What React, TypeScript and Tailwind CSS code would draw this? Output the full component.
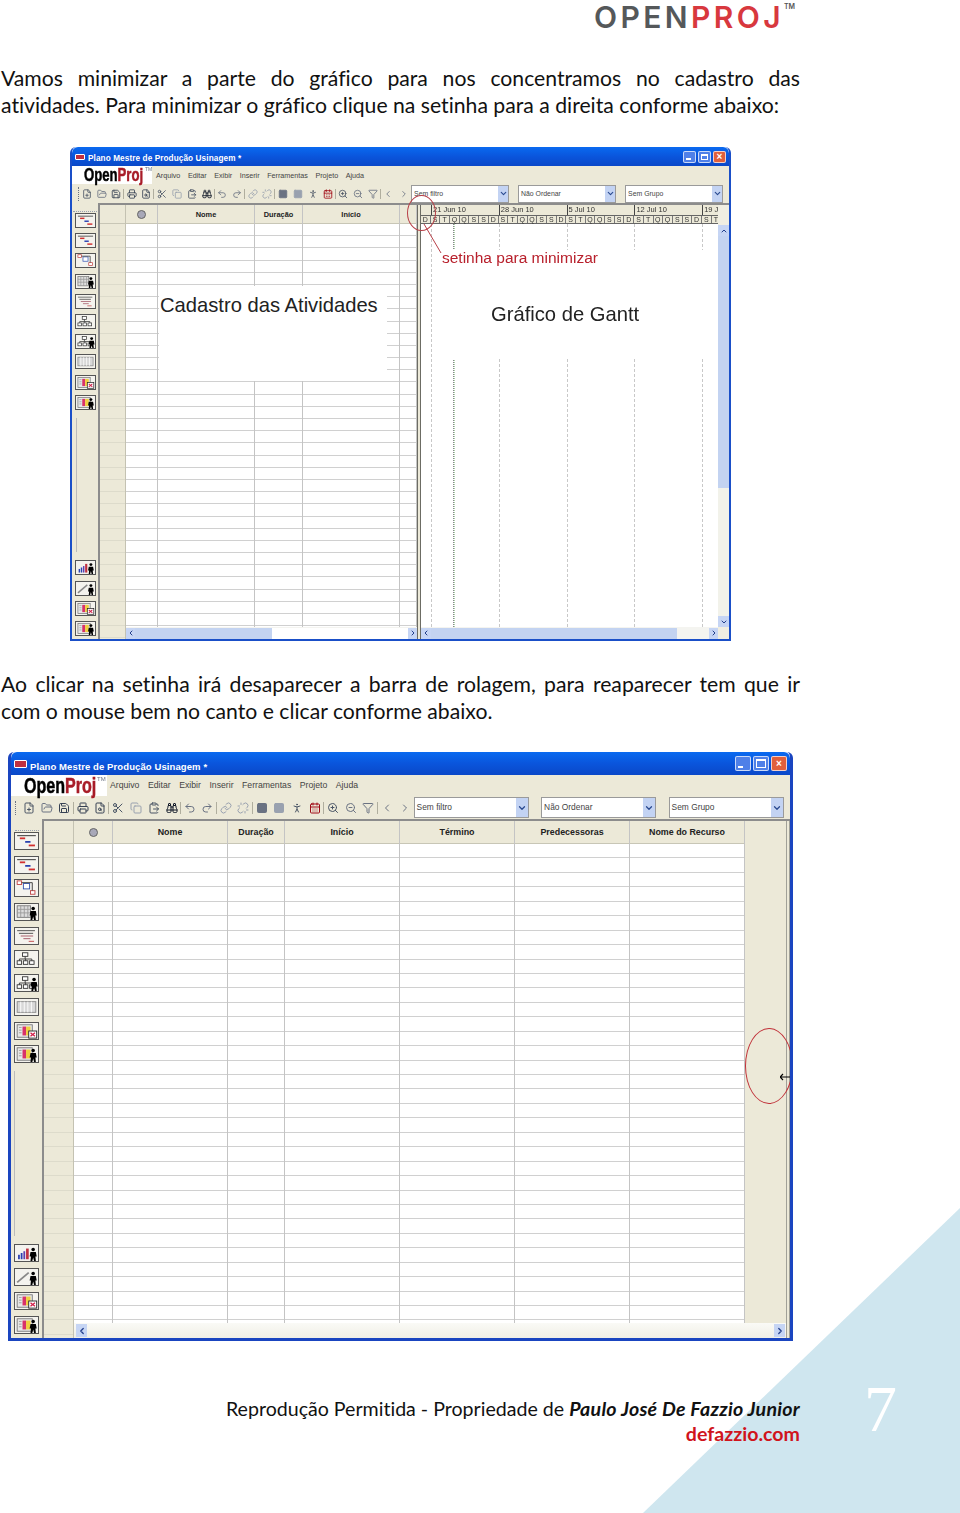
import clsx from "clsx";
import {
  Binoculars,
  CalendarDays,
  ChevronDown,
  ChevronLeft,
  ChevronRight,
  ChevronUp,
  ClipboardPaste,
  Copy,
  FilePlus,
  FileSearch,
  Filter,
  FolderOpen,
  Link,
  PersonStanding,
  Printer,
  Redo2,
  Save,
  Scissors,
  Square,
  Undo2,
  Unlink,
  ZoomIn,
  ZoomOut,
} from "lucide-react";

const menuItems = ["Arquivo", "Editar", "Exibir", "Inserir", "Ferramentas", "Projeto", "Ajuda"];

const toolbarIcons = [
  { Icon: FilePlus, color: "text-gray-600" },
  { Icon: FolderOpen, color: "text-gray-500" },
  { Icon: Save, color: "text-gray-700", sep: true },
  { Icon: Printer, color: "text-gray-700" },
  { Icon: FileSearch, color: "text-gray-700", sep: true },
  { Icon: Scissors, color: "text-gray-600" },
  { Icon: Copy, color: "text-gray-400" },
  { Icon: ClipboardPaste, color: "text-gray-600" },
  { Icon: Binoculars, color: "text-gray-900", sep: true },
  { Icon: Undo2, color: "text-gray-500" },
  { Icon: Redo2, color: "text-gray-500", sep: true },
  { Icon: Link, color: "text-gray-400" },
  { Icon: Unlink, color: "text-gray-400", sep: true },
  { Icon: Square, color: "text-gray-500 fill-gray-500" },
  { Icon: Square, color: "text-gray-400 fill-gray-400" },
  { Icon: PersonStanding, color: "text-gray-600" },
  { Icon: CalendarDays, color: "text-red-800", sep: true },
  { Icon: ZoomIn, color: "text-gray-600" },
  { Icon: ZoomOut, color: "text-gray-500" },
  { Icon: Filter, color: "text-gray-500", sep: true },
  { Icon: ChevronLeft, color: "text-gray-500" },
  { Icon: ChevronRight, color: "text-gray-500" },
];

type IconKind =
  | "gantt"
  | "network"
  | "gridPerson"
  | "report"
  | "wbs"
  | "wbsPerson"
  | "grid"
  | "colorX"
  | "colorPerson"
  | "histogram"
  | "pen";

const topIcons: IconKind[] = ["gantt", "gantt", "network", "gridPerson", "report", "wbs", "wbsPerson", "grid", "colorX", "colorPerson"];
const bottomIcons: IconKind[] = ["histogram", "pen", "colorX", "colorPerson"];

function Person({ x = 17 }: { x?: number }) {
  return (
    <g fill="#000" transform={`translate(${x} 3)`}>
      <circle cx="3" cy="2" r="2" />
      <path d="M0 5h6l1 5H5.500l.5 5H4l-1-4-1 4H0l.5-5H-1z" />
    </g>
  );
}

function TreeBoxes() {
  return (
    <g fill="#fff" stroke="#333" strokeWidth="1">
      <rect x="8" y="2" width="6" height="4" />
      <rect x="2" y="11" width="5" height="4" />
      <rect x="9" y="11" width="5" height="4" />
      <rect x="16" y="11" width="5" height="4" />
      <path d="M11 6v3M4.500 11V9h14v2M11.500 9v2" fill="none" />
    </g>
  );
}

function ColorGrid() {
  return (
    <g>
      <rect x="2" y="2" width="17" height="14" fill="#e8e8e8" stroke="#777" />
      <path d="M4 5h3M4 8h3M4 11h3" stroke="#999" />
      <rect x="8" y="4" width="4" height="10" fill="#d8326a" />
      <rect x="12" y="4" width="5" height="10" fill="#f0d040" />
    </g>
  );
}

function SideIcon({ kind, small }: { kind: IconKind; small: boolean }) {
  return (
    <svg
      viewBox="0 0 25 18"
      className={clsx("shrink-0 border border-[#555] bg-[#f4f3ee]", small ? "h-[15px] w-[21px]" : "h-[18px] w-[25px]")}
    >
      {kind === "gantt" && (
        <g>
          <path d="M2 3h21" stroke="#222" strokeWidth="1" />
          <rect x="5" y="5" width="6" height="2" fill="#d23030" />
          <rect x="11" y="9" width="6" height="2" fill="#2a40b0" />
          <rect x="15" y="13" width="7" height="2" fill="#d23030" />
        </g>
      )}
      {kind === "network" && (
        <g fill="#fff" strokeWidth="1">
          <rect x="2" y="1" width="5" height="4" stroke="#c04040" />
          <rect x="9" y="4" width="7" height="6" stroke="#3050b0" />
          <rect x="17" y="12" width="5" height="4" stroke="#c04040" />
          <path d="M7 3h12v9" fill="none" stroke="#333" />
        </g>
      )}
      {kind === "gridPerson" && (
        <g>
          <rect x="2" y="2" width="15" height="13" fill="#ddd" stroke="#777" />
          <path d="M6 2v13M10 2v13M14 2v13M2 6h15M2 10h15" stroke="#999" />
          <Person />
        </g>
      )}
      {kind === "report" && (
        <g fill="none" strokeWidth="1">
          <path d="M2 3h20M4 6h16" stroke="#444" />
          <path d="M6 9h14M9 12h8" stroke="#a05060" />
          <path d="M15 15h6" stroke="#c04040" />
        </g>
      )}
      {kind === "wbs" && <TreeBoxes />}
      {kind === "wbsPerson" && (
        <g>
          <TreeBoxes />
          <Person x={18} />
        </g>
      )}
      {kind === "grid" && (
        <g>
          <rect x="2" y="3" width="21" height="12" fill="#d8d8d8" stroke="#888" />
          <path d="M6 3v12M10 3v12M14 3v12M18 3v12" stroke="#fff" />
        </g>
      )}
      {kind === "colorX" && (
        <g>
          <ColorGrid />
          <rect x="15" y="9" width="9" height="8" fill="#fff" stroke="#222" />
          <path d="M17 11l5 4M22 11l-5 4" stroke="#d0204a" strokeWidth="1.500" />
        </g>
      )}
      {kind === "colorPerson" && (
        <g>
          <ColorGrid />
          <Person />
        </g>
      )}
      {kind === "histogram" && (
        <g>
          <rect x="3" y="11" width="2" height="5" fill="#2a40b0" />
          <rect x="6" y="9" width="2" height="7" fill="#2a40b0" />
          <rect x="9" y="7" width="2" height="9" fill="#6040b0" />
          <rect x="12" y="4" width="3" height="12" fill="#c03040" />
          <Person />
        </g>
      )}
      {kind === "pen" && (
        <g>
          <path d="M2 15L15 4" stroke="#888" strokeWidth="2" fill="none" />
          <Person />
        </g>
      )}
    </svg>
  );
}

function Sidebar({ small }: { small: boolean }) {
  return (
    <div className={clsx("flex shrink-0 flex-col items-center border-r-2 border-[#8c8c8c] bg-[#ece9d8]", small ? "w-[28px] pt-[8px]" : "w-[33px] pt-[11px]")}>
      <div className="mb-[1px] h-[1px] w-[24px] border-t border-dotted border-gray-400" />
      <div className={clsx("flex flex-col", small ? "gap-[5.200px]" : "gap-[5.700px]")}>
        {topIcons.map((kind, i) => (
          <SideIcon key={i} kind={kind} small={small} />
        ))}
      </div>
      <div className={clsx("flex-1 self-start border-l border-[#bbb]", small ? "my-[8px] ml-[4px]" : "my-[8px] ml-[3px]")} />
      <div className={clsx("flex flex-col", small ? "gap-[5.200px] pb-[3px]" : "gap-[6px] pb-[4px]")}>
        {bottomIcons.map((kind, i) => (
          <SideIcon key={i} kind={kind} small={small} />
        ))}
      </div>
    </div>
  );
}

function TitleBar({ small }: { small: boolean }) {
  const btn = small ? "h-[12px] w-[13px] rounded-[2px]" : "h-[15px] w-[16px] rounded-[2px]";
  return (
    <div
      className={clsx(
        "flex items-center rounded-t-[6px] bg-gradient-to-b from-[#0a6af0] via-[#0a55dc] to-[#0a48c8] font-bold text-white",
        small ? "h-[19px] gap-[3px] pl-[3px] pr-[3px] text-[8.200px]" : "h-[23px] gap-[3px] pl-[3px] pr-[3px] text-[9.500px]"
      )}
    >
      <div className={clsx("rounded-[1px] border border-white bg-[#c03040]", small ? "h-[6px] w-[10px]" : "h-[8px] w-[13px]")} />
      <span className={clsx("flex-1 tracking-[0.1px]", small ? "pt-[3px]" : "pt-[5px]")}>Plano Mestre de Produção Usinagem *</span>
      <div className="flex gap-[2px]">
        <div className={clsx(btn, "relative border border-white/70 bg-[#4f80e8]")}>
          <div className="absolute bottom-[2px] left-[2px] h-[2px] w-[5px] bg-white" />
        </div>
        <div className={clsx(btn, "relative border border-white/70 bg-[#4f80e8]")}>
          <div className="absolute inset-[2px] border border-t-2 border-white" />
        </div>
        <div className={clsx(btn, "flex items-center justify-center border border-white/70 bg-[#e0603c] text-[10px] leading-none")}>×</div>
      </div>
    </div>
  );
}

function MenuBar({ small }: { small: boolean }) {
  return (
    <div className={clsx("flex items-center bg-[#ece9d8] text-[#444]", small ? "h-[18px] text-[7.200px]" : "h-[21px] text-[8.700px]")}>
      <div className={clsx("relative h-full shrink-0 bg-white", small ? "w-[80px]" : "w-[96px]")}>
        <span
          className={clsx(
            "absolute origin-left scale-x-[.73] whitespace-nowrap font-bold [-webkit-text-stroke:0.5px]",
            small ? "left-[12px] top-[-1px] text-[18px] leading-[20px]" : "left-[13px] top-[-1px] text-[22px] leading-[24px]"
          )}
        >
          <span className="text-black">Open</span>
          <span className="text-[#a81c28]">Proj</span>
        </span>
        <span className={clsx("absolute top-[1px] leading-none text-gray-500", small ? "left-[73px] text-[5px]" : "left-[86px] text-[6px]")}>TM</span>
      </div>
      <div className={clsx("flex", small ? "ml-[4px] gap-[7.500px]" : "ml-[3px] gap-[8.500px]")}>
        {menuItems.map((item) => (
          <span key={item}>{item}</span>
        ))}
      </div>
    </div>
  );
}

function Combo({ label, small }: { label: string; small: boolean }) {
  return (
    <div className={clsx("flex items-center border border-[#9a9a9a] bg-white text-[#444]", small ? "h-[18px] w-[98px] pl-[2px] text-[6.900px]" : "h-[21px] w-[115px] pl-[2px] text-[8.400px]")}>
      <span className="flex-1">{label}</span>
      <div className={clsx("flex h-full items-center justify-center bg-[#c3d3f3] text-[#2a4a90]", small ? "w-[10px]" : "w-[12px]")}>
        <ChevronDown size={small ? 9 : 10} strokeWidth={3} />
      </div>
    </div>
  );
}

function Toolbar({ small }: { small: boolean }) {
  return (
    <div className={clsx("flex items-center bg-[#ece9d8]", small ? "h-[19px] pl-[6px]" : "h-[23px] pl-[4px]")}>
      <div className={clsx("h-[14px] border-l border-dotted border-gray-500", small ? "mr-[0px]" : "mr-[4px]")} />
      <div className="flex items-center">
        {toolbarIcons.map(({ Icon, color, sep }, i) => (
          <div key={i} className={clsx("flex items-center justify-center", small ? "w-[15.100px]" : "w-[17.900px]", sep && "border-r border-[#b0ae9e]")}>
            <Icon size={small ? 10 : 12} strokeWidth={2} className={color} />
          </div>
        ))}
      </div>
      <div className={clsx("flex", small ? "gap-[9px]" : "gap-[12.500px]")}>
        <Combo label="Sem filtro" small={small} />
        <Combo label="Não Ordenar" small={small} />
        <Combo label="Sem Grupo" small={small} />
      </div>
    </div>
  );
}

function Rows({ small, count, tone }: { small: boolean; count: number; tone: string }) {
  return (
    <>
      {Array.from({ length: count }).map((_, i) => (
        <div key={i} className={clsx("shrink-0 border-b-[1.500px]", tone, small ? "h-[12.200px]" : "h-[14.450px]")} />
      ))}
    </>
  );
}

function Column({ label, width, small, count }: { label?: React.ReactNode; width: string; small: boolean; count: number }) {
  return (
    <div className={clsx("flex shrink-0 flex-col overflow-hidden border-r border-[#c4c4c4] bg-white", width)}>
      <div className={clsx("flex shrink-0 items-center justify-center border-b border-[#c8c6b6] bg-[#ece9d8] font-bold text-[#222]", small ? "h-[19px] text-[7.400px]" : "h-[23px] text-[8.900px]")}>
        {label}
      </div>
      <Rows small={small} count={count} tone="border-[#d0d0d0]" />
    </div>
  );
}

function RowHeader({ width, small, count }: { width: string; small: boolean; count: number }) {
  return (
    <div className={clsx("flex shrink-0 flex-col overflow-hidden border-r border-[#c4c2b2] bg-[#ece9d8]", width)}>
      <div className={clsx("shrink-0 border-b border-[#c8c6b6]", small ? "h-[19px]" : "h-[23px]")} />
      <Rows small={small} count={count} tone="border-[#dddbcb]" />
    </div>
  );
}

function InfoGlyph() {
  return <div className="h-[9px] w-[9px] rounded-full border border-[#666] bg-[#a8a8b8]" />;
}

function ScrollButton({ children, className }: { children: React.ReactNode; className?: string }) {
  return (
    <div className={clsx("flex shrink-0 items-center justify-center bg-[#c6d5f4] text-[#24408c]", className)}>{children}</div>
  );
}

const ganttDays = ["D", "S", "T", "Q", "Q", "S", "S"];
const ganttWeeks = ["21 Jun 10", "28 Jun 10", "5 Jul 10", "12 Jul 10", "19 J"];

function GanttPane() {
  return (
    <div className="flex min-w-0 flex-1 bg-white">
      <div className="flex min-w-0 flex-1 flex-col">
        <div className="relative flex min-h-0 flex-1 flex-col overflow-hidden">
          <div className="flex h-[10px] shrink-0 bg-[#ece9d8] pl-[10px] text-[7.500px] leading-[10px] text-[#333]">
            {ganttWeeks.map((week) => (
              <div key={week} className="w-[67.800px] shrink-0 border-l border-[#444] pl-[1px]">
                {week}
              </div>
            ))}
          </div>
          <div className="flex h-[9px] shrink-0 border-y border-[#666] bg-[#ece9d8] text-[7px] leading-[8px] text-[#333]">
            {Array.from({ length: 31 }).map((_, i) => (
              <div key={i} className="w-[9.690px] shrink-0 border-r border-[#777] text-center">
                {ganttDays[i % 7]}
              </div>
            ))}
          </div>
          <div className="flex flex-1 pl-[10px]">
            {[0, 1, 2, 3, 4].map((week) => (
              <div key={week} className="w-[67.800px] shrink-0 border-l border-dashed border-[#c8c8c8]" />
            ))}
          </div>
          <div className="absolute bottom-0 left-[32px] top-[19px] w-[2px] border-l border-r border-dotted border-l-[#888] border-r-[#a9d0a9]" />
          {/* white box pasted over the chart in the screenshot */}
          <div className="absolute left-[19px] top-[45px] h-[109px] w-[280px] bg-white" />
        </div>
        <div className="flex h-[12px] shrink-0 items-center bg-[#f4f4f0]">
          <ScrollButton className="h-[11px] w-[10px]">
            <ChevronLeft size={8} strokeWidth={3} />
          </ScrollButton>
          <div className="h-[11px] w-[246px] bg-[#c3d3f1]" />
          <div className="flex-1 bg-white" />
          <ScrollButton className="h-[11px] w-[9px]">
            <ChevronRight size={8} strokeWidth={3} />
          </ScrollButton>
        </div>
      </div>
      <div className="flex w-[11px] shrink-0 flex-col bg-[#f0eee2] pt-[20px]">
        <ScrollButton className="h-[11px]">
          <ChevronUp size={8} strokeWidth={3} />
        </ScrollButton>
        <div className="h-[252px] bg-[#c3d3f1]" />
        <div className="flex-1 bg-[#f2f2ea]" />
        <ScrollButton className="mb-[12px] h-[11px]">
          <ChevronDown size={8} strokeWidth={3} />
        </ScrollButton>
      </div>
    </div>
  );
}

function FirstWindow() {
  return (
    <div className="relative ml-[70px] flex h-[494px] w-[661px] flex-col overflow-hidden rounded-t-[6px] border-x-[2px] border-b-[2px] border-[#1a4fc8] font-['Liberation_Sans',sans-serif] blur-[0.4px]">
      <TitleBar small />
      <MenuBar small />
      <Toolbar small />
      <div className="flex min-h-0 flex-1 bg-[#ece9d8]">
        <Sidebar small />
        <div className="flex min-w-0 flex-1 border-t-2 border-[#8c8c8c]">
          <RowHeader width="w-[26px]" small count={34} />
          <div className="flex w-[291px] shrink-0 flex-col">
            <div className="flex min-h-0 flex-1 overflow-hidden">
              <Column width="w-[32px]" small count={33} label={<InfoGlyph />} />
              <Column width="w-[97px]" small count={33} label="Nome" />
              <Column width="w-[48px]" small count={33} label="Duração" />
              <Column width="w-[97px]" small count={33} label="Início" />
              <Column width="w-[17px]" small count={33} />
            </div>
            <div className="flex h-[12px] shrink-0 items-center bg-[#f4f4f0]">
              <ScrollButton className="h-[11px] w-[9px]">
                <ChevronLeft size={8} strokeWidth={3} />
              </ScrollButton>
              <div className="h-[11px] w-[137px] bg-[#c3d3f1]" />
              <div className="h-[11px] flex-1 bg-white" />
              <ScrollButton className="h-[11px] w-[9px]">
                <ChevronRight size={8} strokeWidth={3} />
              </ScrollButton>
            </div>
          </div>
          <div className="w-[4px] shrink-0 border-x border-x-[#6c6c64] bg-[#ece9d8]" />
          <GanttPane />
        </div>
      </div>

      {/* annotations drawn on top of the screenshot */}
      <div className="absolute left-[87px] top-[139px] flex h-[95px] w-[228px] items-start bg-white pl-[1px] pt-[7px] text-[20.200px] leading-[24px] text-[#222]">
        Cadastro das Atividades
      </div>
      <div className="absolute left-[370px] top-[102px] text-[15.500px] leading-[18px] text-[#b8202c]">setinha para minimizar</div>
      <div className="absolute left-[419px] top-[155px] text-[20.200px] leading-[24px] text-[#222]">Gráfico de Gantt</div>
      <div className="absolute left-[335px] top-[48px] h-[36px] w-[29px] rounded-[50%] border border-[#b84048]" />
      <svg className="absolute left-[350px] top-[76px] h-[32px] w-[22px]" viewBox="0 0 22 32">
        <path d="M2 1l17 29" stroke="#b84048" strokeWidth="1" fill="none" />
      </svg>
    </div>
  );
}

function SecondWindow() {
  const cols = [
    { width: "w-[39px]", label: <InfoGlyph /> },
    { width: "w-[115px]", label: "Nome" },
    { width: "w-[57px]", label: "Duração" },
    { width: "w-[115px]", label: "Início" },
    { width: "w-[115px]", label: "Término" },
    { width: "w-[115px]", label: "Predecessoras" },
    { width: "w-[115px]", label: "Nome do Recurso" },
  ];
  return (
    <div className="relative ml-[8px] flex h-[589px] w-[785px] flex-col overflow-hidden rounded-t-[6px] border-x-[3px] border-b-[3px] border-[#1a45c0] font-['Liberation_Sans',sans-serif] blur-[0.4px]">
      <TitleBar small={false} />
      <MenuBar small={false} />
      <Toolbar small={false} />
      <div className="flex min-h-0 flex-1 bg-[#ece9d8]">
        <Sidebar small={false} />
        <div className="flex min-w-0 flex-1 border-t-2 border-[#8c8c8c]">
          <RowHeader width="w-[30px]" small={false} count={34} />
          <div className="flex min-w-0 flex-1 flex-col">
            <div className="flex min-h-0 flex-1 overflow-hidden">
              {cols.map((col, i) => (
                <Column key={i} width={col.width} small={false} count={33} label={col.label} />
              ))}
            </div>
            <div className="flex h-[15px] shrink-0 items-center bg-gradient-to-b from-[#fafaf6] to-[#f0efe6] pl-[2px] pr-[1px]">
              <ScrollButton className="h-[13px] w-[11px]">
                <ChevronLeft size={10} strokeWidth={3} />
              </ScrollButton>
              <div className="flex-1" />
              <ScrollButton className="h-[13px] w-[11px]">
                <ChevronRight size={10} strokeWidth={3} />
              </ScrollButton>
            </div>
          </div>
          <div className="w-[4px] shrink-0 border-x border-x-[#a0a098] bg-[#ece9d8]" />
        </div>
      </div>

      <div className="absolute left-[734px] top-[276px] h-[76px] w-[48px] rounded-[50%] border border-[#c03038]" />
      <svg className="absolute left-[769px] top-[321px] h-[8px] w-[13px]" viewBox="0 0 13 8">
        <path d="M0 4h13M3 1L0 4l3 3" stroke="#000" strokeWidth="1.200" fill="none" />
      </svg>
    </div>
  );
}

export default function App() {
  return (
    <div className="relative isolate h-[1513px] w-[960px] overflow-hidden bg-white font-['Lato',sans-serif] text-[21.200px] leading-[27px] text-[#111] [font-variant-ligatures:none]">
      <svg className="absolute bottom-0 right-0 -z-10 h-[305px] w-[317px]" viewBox="0 0 317 305">
        <polygon points="317,0 317,305 0,305" fill="#cfe6ef" />
      </svg>
      <div className="absolute left-[864px] top-[1371px] font-['Liberation_Serif',serif] text-[66px] leading-[76px] text-white">7</div>

      <div className="flex h-[33px] items-center justify-end pr-[165px] pt-[1px]">
        <div className="flex items-start font-['Inter',sans-serif] text-[30px] font-semibold leading-[33px] tracking-[3.400px]">
          <span className="text-[#55585a]">OPEN</span>
          <span className="text-[#d8383e]">PROJ</span>
          <span className="mt-[2px] text-[7px] leading-[8px] tracking-normal text-[#555]">TM</span>
        </div>
      </div>

      <p className="ml-[1px] mt-[32px] w-[799px] text-justify">
        Vamos minimizar a parte do gráfico para nos concentramos no cadastro das atividades. Para minimizar o gráfico clique na setinha para a direita conforme abaixo:
      </p>

      <div className="mt-[28px]">
        <FirstWindow />
      </div>

      <p className="ml-[1px] mt-[30px] w-[799px] text-justify">
        Ao clicar na setinha irá desaparecer a barra de rolagem, para reaparecer tem que ir com o mouse bem no canto e clicar conforme abaixo.
      </p>

      <div className="mt-[27px]">
        <SecondWindow />
      </div>

      <div className="mt-[55px] w-[800px] text-right text-[19.600px] leading-[25px]">
        <p>
          Reprodução Permitida - Propriedade de <span className="font-bold italic tracking-[0.25px]">Paulo José De Fazzio Junior</span>
        </p>
        <p className="font-bold text-[#d0141c]">defazzio.com</p>
      </div>
    </div>
  );
}
